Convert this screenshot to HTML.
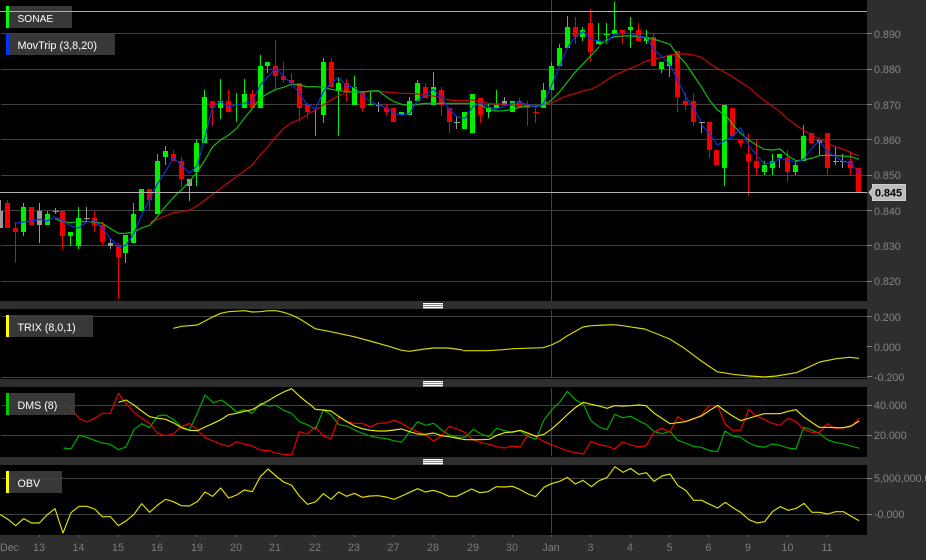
<!DOCTYPE html>
<html>
<head>
<meta charset="utf-8">
<title>SONAE</title>
<style>
html,body{margin:0;padding:0;background:#2e2e2e;width:926px;height:560px;overflow:hidden}
svg{display:block;font-family:"Liberation Sans",Arial,sans-serif}
.ax{fill:#858585;font-size:10.7px}
.dt{fill:#7c7c7c;font-size:10.7px;text-anchor:middle}
.lb{fill:#fff;font-size:10.7px}
.box{fill:#404040;fill-opacity:.88}
</style>
</head>
<body>
<svg xmlns="http://www.w3.org/2000/svg" width="926" height="560" viewBox="0 0 926 560">
<rect width="926" height="560" fill="#2e2e2e"/>
<!-- panels -->
<rect x="0" y="0" width="867" height="301" fill="#000"/>
<rect x="0" y="309" width="867" height="70" fill="#000"/>
<rect x="0" y="387" width="867" height="70" fill="#000"/>
<rect x="0" y="465" width="867" height="70" fill="#000"/>
<!-- grids -->
<path d="M1 33.5H867M1 69.5H867M1 104.5H867M1 139.5H867M1 175.5H867M1 210.5H867M1 245.5H867M1 281.5H867M1 316.5H867M1 377.5H867M1 405.5H867M1 435.5H867M1 478.5H867M1 514.5H867M551.5 0V301M551.5 310V377M551.5 388V456M551.5 466V533" stroke="#424242" stroke-width="1" fill="none"/>
<path d="M39.5 535v2M78.5 535v2M118.5 535v2M157.5 535v2M196.5 535v2M236.5 535v2M275.5 535v2M314.5 535v2M354.5 535v2M393.5 535v2M433.5 535v2M473.5 535v2M512.5 535v2M551.5 535v2M590.5 535v2M630.5 535v2M669.5 535v2M708.5 535v2M748.5 535v2M787.5 535v2M827.5 535v2" stroke="#666" fill="none"/>
<!-- wicks -->
<path fill="none" stroke="#00f000" stroke-width="1" d="M23.5 203V236M47.5 211V225M55.5 208V214M53 211.5H59M70.5 232V246M78.5 207V249M125.5 235V263M133.5 203V243M157.5 154V214M165.5 146V165M196.5 139V186M204.5 90V143M220.5 79V119M236.5 93V122M244.5 79V108M260.5 55V108M267.5 62V73M315.5 108V136M323.5 58V123M338.5 78V136M354.5 76V105M370.5 91V105M409.5 97V115M417.5 80V101M433.5 72V105M488.5 104V118M496.5 90V108M543.5 83V108M551.5 62V90M559.5 44V66M567.5 16V48M582.5 27V41M598.5 23V44M606.5 23V44M604 34.5H610M614.5 2V34M630.5 17V48M646.5 30V44M661.5 62V73M669.5 55V77M724.5 105V186M764.5 161V175M772.5 154V175M779.5 154V168M795.5 161V175M803.5 125V161M835.5 147V165M833 161.5H839"/>
<path fill="none" stroke="#f00000" stroke-width="1" d="M7.5 200V228M15.5 222V263M62.5 211V249M94.5 211V232M102.5 222V246M118.5 243V299M149.5 189V211M173.5 150V161M181.5 157V187M212.5 101V126M228.5 90V112M252.5 90V108M275.5 40V90M283.5 62V83M291.5 73V87M299.5 83V122M307.5 104V118M331.5 58V87M346.5 79V102M362.5 91V112M386.5 104V116M425.5 83V98M441.5 87V116M449.5 108V133M480.5 98V123M519.5 98V108M527.5 101V126M535.5 104V123M533 112.5H539M575.5 17V44M590.5 9V62M622.5 30V44M638.5 23V41M653.5 33V66M677.5 51V112M685.5 93V110M693.5 93V126M709.5 122V158M740.5 140V147M748.5 133V196M756.5 139V175M787.5 150V182M827.5 133V175M850.5 151V175"/>
<path fill="none" stroke="#999" stroke-width="1" d="M.5 200V228M39.5 203V243M86.5 207V223M84 218.5H90M110.5 239V249M189.5 179V201M378.5 102V112M376 105.5H382M456.5 116V129M454 122.5H460M504.5 97V105M701.5 122V133M699 122.5H705M819.5 140V155M842.5 154V168M840 161.5H846"/>
<!-- bodies -->
<path fill="none" stroke="#00f000" stroke-width="5.1" d="M23.5 207V232M47.5 214V225M70.5 232V236M78.5 218V246M125.5 235V253M133.5 214V243M141.5 189V211M157.5 161V214M165.5 151V157M196.5 143V172M204.5 97V143M220.5 101V108M244.5 94V108M260.5 66V108M267.5 62V66M323.5 62V115M338.5 83V91M354.5 87V105M370.5 104V105M401.5 112V115M409.5 101V115M417.5 83V101M433.5 87V105M464.5 112V129M472.5 94V133M488.5 108V112M496.5 105V108M512.5 101V112M543.5 90V108M551.5 66V90M559.5 48V66M567.5 27V48M582.5 30V37M598.5 41V44M614.5 30V34M630.5 27V30M646.5 37V41M661.5 62V69M669.5 55V66M724.5 105V168M764.5 165V172M772.5 161V168M779.5 154V158M795.5 165V172M803.5 136V161"/>
<path fill="none" stroke="#f00000" stroke-width="5.1" d="M7.5 203V228M15.5 228V232M31.5 207V225M62.5 211V236M94.5 218V225M102.5 225V242M118.5 246V257M149.5 189V200M173.5 154V161M181.5 161V179M212.5 101V108M228.5 101V112M252.5 94V108M275.5 66V76M283.5 76V80M291.5 80V83M299.5 83V108M307.5 104V112M331.5 62V87M346.5 83V91M362.5 91V108M386.5 108V112M393.5 108V122M425.5 87V98M441.5 90V105M449.5 108V122M480.5 98V115M519.5 101V108M527.5 104V108M575.5 27V37M590.5 23V52M622.5 30V34M638.5 30V41M653.5 37V66M677.5 51V97M685.5 101V105M693.5 101V122M709.5 122V150M716.5 150V165M732.5 108V136M740.5 140V143M748.5 154V161M756.5 161V168M787.5 158V172M811.5 133V143M827.5 133V168M850.5 161V168M858.5 168V192"/>
<path fill="none" stroke="#999" stroke-width="5.1" d="M.5 211V228M39.5 211V225M110.5 243V246M189.5 179V186M504.5 101V105M819.5 140V143"/>
<!-- MA20 red -->
<g fill="none" stroke="#c80808" stroke-width="3.5" stroke-linejoin="round">
<polyline transform="translate(0 160) scale(.33333)" points="449,188 472,178 496,168 520,158 544,155 568,150 592,138 615,120 640,102 662,85 686,67 710,50 733,32 757,15 768,0"/>
<polyline transform="translate(0 0) scale(.33333)" points="768,480 781,465 804,440 828,410 851,385 875,368 898,358 922,345"/>
<polyline transform="translate(300 50) scale(.33333)" points="22,193 46,180 70,165 93,150 116,137 140,127 163,125 187,125 211,125 235,124 258,126 282,128 306,130 329,130 353,132 376,136 400,138 424,145 447,150 471,152 495,152 518,150 542,155 565,160 589,162 613,162 637,165 660,168 684,168 708,167 731,165 755,158 779,147 803,137 827,130 851,122 875,117 898,105 922,90"/>
<polyline transform="translate(540 0) scale(.33333)" points="200,240 224,225 248,215 271,205 295,195 319,183 343,177 366,172 390,165 413,162 437,162 460,165 484,172 508,190 532,205 556,218 570,225 592,240 615,255 635,268"/>
<polyline transform="translate(690 90) scale(.33333)" points="185,0 224,33 270,65 294,88 318,105 341,122 365,135 388,147 412,160 436,170 460,178 483,188 507,198"/>
</g>
<!-- MA8 green -->
<g fill="none" stroke="#10c010" stroke-width="3.5" stroke-linejoin="round">
<polyline transform="translate(0 160) scale(.33333)" points="165,176 189,185 212,188 236,184 260,185 283,186 307,190 331,205 355,220 378,220 402,215 425,204 449,196 472,170 496,140 520,112 544,90 568,65 592,35 615,0"/>
<polyline transform="scale(.33333)" points="615,480 638,440 662,420 686,405 710,385 733,355 757,325 781,295 804,280 828,268 851,262 875,252 898,255 922,260"/>
<polyline transform="translate(300 50) scale(.33333)" points="22,110 46,110 70,112 93,118 116,122 140,125 163,126 187,126 211,123 235,122 258,140 282,155 306,163 329,167 353,163 376,160 400,160 424,160 447,160 471,160 495,160 518,160 542,165 565,178 589,183 613,182 637,178 660,172 684,167 708,170 731,165 755,150 779,125 803,95 827,65 851,40 875,15 898,-10"/>
<polyline transform="translate(540 0) scale(.33333)" points="177,135 200,120 224,110 248,108 271,108 295,110 319,113 343,118 366,125 390,133 413,165 437,190 460,225 484,260 508,300 532,330 556,345"/>
<polyline transform="translate(690 90) scale(.33333)" points="105,72 129,105 152,130 176,150 199,165 223,178 247,180 270,177 294,198 318,212 341,210 365,205 388,197 412,196 436,197 460,198 483,200 507,208"/>
</g>
<!-- MA3 blue -->
<g fill="none" stroke="#0a32e6" stroke-width="3.5" stroke-linejoin="round">
<polyline transform="translate(0 160) scale(.33333)" points="47,190 70,186 94,183 118,178 142,183 165,170 189,183 212,198 236,204 260,186 283,182 307,205 331,235 355,260 378,256 402,220 425,165 449,118 472,72 496,35 517,0"/>
<polyline transform="scale(.33333)" points="517,480 520,473 544,495 568,519 592,497 615,410 638,320 662,305 686,320 710,315 733,310 757,305 781,255 804,230 828,205 851,230 875,250 898,280 922,315"/>
<polyline transform="translate(300 50) scale(.33333)" points="22,160 46,178 70,125 93,100 116,82 140,108 163,112 187,135 211,155 235,165 258,172 282,190 306,195 329,190 353,150 376,135 400,118 424,140 447,178 471,200 495,205 518,170 542,158 565,170 589,178 613,168 637,160 660,158 684,163 708,172 731,160 755,105 779,50"/>
<polyline transform="translate(540 0) scale(.33333)" points="58,200 82,145 106,110 130,95 153,118 177,123 200,125 224,103 248,100 271,100 295,108 319,112 343,150 366,170 390,195 413,240 437,290 460,325 484,365"/>
<polyline transform="translate(690 90) scale(.33333)" points="35,105 58,130 82,165 105,152 129,140 152,113 176,165 199,195 223,222 247,218 270,205 294,210 318,217 341,208 365,175 388,152 412,185 436,200 460,215 483,218 507,250"/>
</g>
<!-- TRIX -->
<g fill="none" stroke="#d8d800" stroke-width="3.5" stroke-linejoin="round">
<polyline transform="translate(0 295) scale(.33333)" points="520,100 545,94 592,90 615,78 640,65 662,55 686,50 733,47 757,51 781,50 804,47 828,47 851,52 875,60 898,71 945,101 992,110 1062,125 1110,138 1170,155 1205,166 1228,169 1275,162 1300,159 1323,159 1345,159 1388,165"/>
<polyline transform="translate(463 295) scale(.33333)" points="0,167 75,167 120,164 150,161 240,158 265,150 290,138 310,124 335,110 360,96 385,92 430,90 450,89 480,92 510,97 545,102 575,114 620,132 660,157 715,198 762,230 810,238 860,243 905,246 940,243 1000,233 1040,215 1070,201 1120,191 1160,187 1188,190"/>
</g>
<!-- DMS green -->
<g fill="none" stroke="#00ad00" stroke-width="3.5" stroke-linejoin="round">
<polyline transform="translate(0 380) scale(.33333)" points="190,204 213,207 237,166 260,172 284,181 307,189 331,193 355,209 378,201 402,148 425,131 449,143 473,108 497,105 520,118 544,140 568,150 592,100 615,45 640,68 664,60 686,75 710,96 733,89 757,100 781,70 805,78 828,76 851,91 875,100 898,125 922,134 930,138"/>
<polyline transform="translate(310 380) scale(.33333)" points="0,138 16,148 40,90 63,105 87,134 110,138 134,150 157,160 181,168 205,173 228,176 252,182 275,187 299,155 323,125 347,136 371,130 395,150 418,165 442,172 466,172 490,148 513,162 537,170 560,145 584,152 607,157 631,152 655,170 678,178 702,120 726,88 750,66 772,34 797,60 820,72 843,122 867,141 891,149 914,103"/>
<polyline transform="translate(616 380) scale(.33333)" points="-4,103 20,113 45,109 68,122 90,133 115,155 138,161 162,154 185,181 208,189 232,199 256,202 280,211 305,215 327,153 350,168 374,172 398,189 420,198 445,202 468,192 492,196 516,204 540,207 563,142 587,150 610,160 634,179 657,187 681,191 705,198 730,205"/>
</g>
<!-- DMS red -->
<g fill="none" stroke="#ee0000" stroke-width="3.5" stroke-linejoin="round">
<polyline transform="translate(0 380) scale(.33333)" points="190,70 213,85 237,115 260,126 284,115 307,100 331,100 355,40 378,70 402,98 425,115 449,130 473,160 497,167 520,162 544,140 568,130 592,150 615,173 640,183 664,193 686,199 710,185 733,192 757,198 781,210 805,212 828,219 851,223 875,225 898,155 922,162 930,155"/>
<polyline transform="translate(310 380) scale(.33333)" points="0,155 16,140 40,168 63,176 87,110 110,125 134,130 157,130 181,140 205,130 228,129 252,121 275,130 299,145 323,155 347,166 371,183 395,167 418,139 442,147 466,158 490,180 513,188 537,193 560,200 584,204 607,198 631,201 655,160 678,170 702,185 726,195 750,204 774,213 797,218 820,222 843,184 867,194 891,198 914,207"/>
<polyline transform="translate(616 380) scale(.33333)" points="-4,207 20,186 45,195 68,201 90,197 115,155 138,145 162,157 185,110 208,125 232,118 256,105 280,77 305,77 327,132 350,151 374,150 398,88 420,108 445,118 468,130 492,136 516,115 540,125 563,148 587,157 610,157 634,131 657,145 681,144 705,140 730,115"/>
</g>
<!-- DMS yellow -->
<g fill="none" stroke="#e8e800" stroke-width="3.5" stroke-linejoin="round">
<polyline transform="translate(0 380) scale(.33333)" points="355,67 378,60 402,75 425,93 449,110 473,115 497,118 520,128 544,143 568,151 592,152 615,141 640,130 664,118 686,104 710,100 733,94 757,89 781,75 805,62 828,48 851,36 875,26 898,48 922,68 930,73"/>
<polyline transform="translate(310 380) scale(.33333)" points="0,73 16,88 40,90 63,93 87,110 110,125 134,138 157,146 181,151 205,153 228,153 252,150 275,147 299,155 323,162 347,163 371,159 395,167 418,170 442,175 466,179 490,179 513,179 537,178 560,166 584,158 607,156 631,151 655,160 678,169 702,163 726,146 750,125 774,102 797,82 820,67 843,73 867,78 891,85 914,77"/>
<polyline transform="translate(616 380) scale(.33333)" points="-4,77 20,78 45,77 68,75 90,77 115,100 138,115 162,131 185,128 208,125 232,116 256,108 280,92 305,76 327,93 350,108 374,122 398,115 420,108 445,101 468,101 492,101 516,94 540,89 563,110 587,127 610,142 634,142 657,143 681,143 705,138 730,123"/>
</g>
<!-- OBV -->
<g fill="none" stroke="#e0e000" stroke-width="3.5" stroke-linejoin="round">
<polyline transform="translate(0 460) scale(.33333)" points="0,163 24,178 47,197 71,176 95,189 118,189 142,164 165,146 189,219 213,158 237,139 260,139 284,147 307,170 331,170 355,197 378,183 402,163 425,131 449,157 473,135 497,118 520,125 544,137 568,138 592,125 615,96 638,109 662,84 686,114 710,105 733,90 757,95 781,50 804,27 828,48 851,66 875,76 898,108 922,133 946,126 970,101 993,118 1016,96 1040,109 1063,100 1087,112 1110,108 1134,107 1158,111 1182,118 1205,108 1229,97 1253,86 1276,96 1300,91 1323,98 1347,109 1370,109 1389,100"/>
<polyline transform="translate(463 460) scale(.33333)" points="0,100 26,87 50,98 75,95 100,80 125,81 148,79 170,88 195,102 218,110 243,82 265,71 290,64 313,52 337,72 360,61 385,80 408,62 432,53 456,20 480,37 503,25 527,43 550,38 573,64 597,48 621,42 645,77 669,92 692,121 716,121 740,133 764,144 787,127 811,144 834,158 858,179 882,189 905,185 929,154 952,140 976,151 1000,145 1023,130 1047,157 1070,157 1094,162 1118,155 1141,155 1165,169 1188,182"/>
</g>
<!-- grips -->
<rect x="423" y="303" width="20" height="6" fill="#8a8a8a"/>
<rect x="423" y="381" width="20" height="6" fill="#8a8a8a"/>
<rect x="423" y="459" width="20" height="6" fill="#8a8a8a"/>
<path d="M423 303.5H443M423 305.5H443M423 307.5H443M423 381.5H443M423 383.5H443M423 385.5H443M423 459.5H443M423 461.5H443M423 463.5H443" stroke="#fff" fill="none"/>
<!-- label boxes -->
<rect class="box" x="6" y="6" width="66" height="22"/><rect x="6" y="6" width="3" height="22" fill="#00ff00"/>
<text class="lb" x="17.5" y="22" font-size="10.2" style="font-size:10.2px">SONAE</text>
<rect class="box" x="6" y="33" width="109" height="22"/><rect x="6" y="33" width="3" height="22" fill="#0033ff"/>
<text class="lb" x="17.5" y="49" style="font-size:10.9px">MovTrip (3,8,20)</text>
<rect class="box" x="6" y="315" width="87" height="22"/><rect x="6" y="315" width="3" height="22" fill="#ffff00"/>
<text class="lb" x="17.5" y="331">TRIX (8,0,1)</text>
<rect class="box" x="6" y="393" width="69" height="22"/><rect x="6" y="393" width="3" height="22" fill="#00cc00"/>
<text class="lb" x="17.5" y="409">DMS (8)</text>
<rect class="box" x="6" y="471" width="56" height="22"/><rect x="6" y="471" width="3" height="22" fill="#ffff00"/>
<text class="lb" x="17.5" y="487">OBV</text>
<!-- bright lines -->
<path d="M0 11.5H867M0 192.5H867" stroke="#b0b0b0" stroke-width="1" fill="none"/>
<!-- right ticks -->
<path d="M867 33.5h5M867 69.5h5M867 104.5h5M867 139.5h5M867 175.5h5M867 210.5h5M867 245.5h5M867 281.5h5M867 316.5h5M867 346.5h5M867 376.5h5M867 405.5h5M867 435.5h5M867 478.5h5M867 514.5h5" stroke="#808080" stroke-width="1" fill="none"/>
<!-- right axis -->
<g class="ax">
<text x="874" y="38">0.890</text>
<text x="874" y="73">0.880</text>
<text x="874" y="109">0.870</text>
<text x="874" y="144">0.860</text>
<text x="874" y="179">0.850</text>
<text x="874" y="215">0.840</text>
<text x="874" y="250">0.830</text>
<text x="874" y="285">0.820</text>
<text x="874" y="321">0.200</text>
<text x="874" y="351">0.000</text>
<text x="874" y="381">-0.200</text>
<text x="874" y="409">40.000</text>
<text x="874" y="439">20.000</text>
<text x="874" y="482">5,000,000.0</text>
<text x="874" y="518">-0.000</text>
</g>
<!-- price tag -->
<path d="M869 192.5L872.5 188V184.5H905.5V200.5H872.5V197Z" fill="#bdbdbd" stroke="#d0d0d0" stroke-width="1"/>
<text x="888.5" y="196.5" fill="#000" font-weight="bold" font-size="10.8" text-anchor="middle">0.845</text>
<!-- date axis -->
<text x="0" y="551" fill="#7c7c7c" font-size="10.7">Dec</text>
<g class="dt">
<text x="39" y="551">13</text>
<text x="78.5" y="551">14</text>
<text x="118" y="551">15</text>
<text x="157" y="551">16</text>
<text x="197" y="551">19</text>
<text x="236" y="551">20</text>
<text x="275" y="551">21</text>
<text x="315" y="551">22</text>
<text x="354" y="551">23</text>
<text x="393.5" y="551">27</text>
<text x="433" y="551">28</text>
<text x="473" y="551">29</text>
<text x="512" y="551">30</text>
<text x="551" y="551">Jan</text>
<text x="590.5" y="551">3</text>
<text x="630" y="551">4</text>
<text x="669.5" y="551">5</text>
<text x="708.5" y="551">6</text>
<text x="748" y="551">9</text>
<text x="787.5" y="551">10</text>
<text x="827" y="551">11</text>
</g>
</svg>
</body>
</html>
